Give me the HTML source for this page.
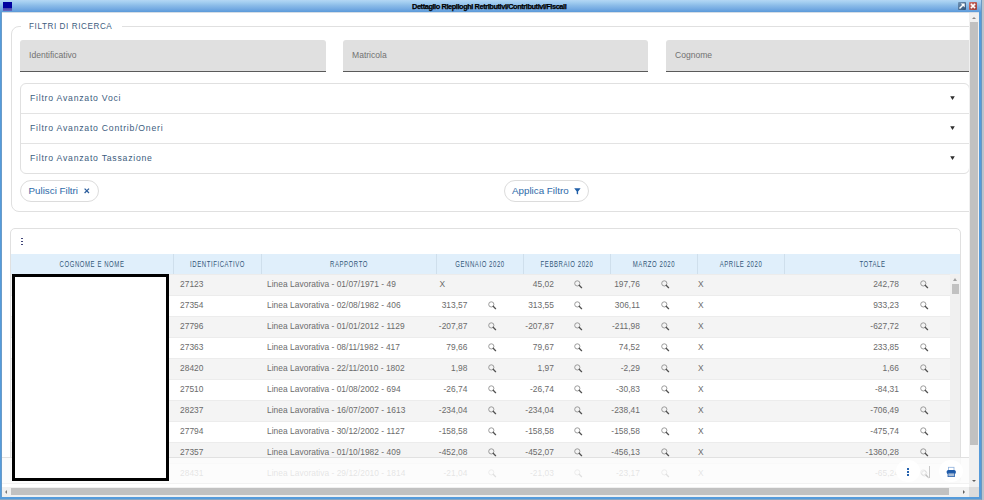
<!DOCTYPE html>
<html><head><meta charset="utf-8">
<style>
*{box-sizing:border-box;margin:0;padding:0}
html,body{width:984px;height:500px;overflow:hidden;background:#b9c4ce;font-family:"Liberation Sans",sans-serif}
#win{position:absolute;left:0;top:0;width:982px;height:500px;background:#559bdb;border-right:1px solid #6b97c0;border-bottom:1px solid #87a7c3}
#win .lb{position:absolute;left:1px;top:12px;width:1px;height:485px;background:#6a9bc8}
#title{position:absolute;left:0;top:0;width:981px;height:12px;background:linear-gradient(#b4d7f4 0%,#a2cdf0 20%,#8cbce8 45%,#74aae2 75%,#5b9ad9 100%)}
#tline{position:absolute;left:2px;top:12px;width:977px;height:1px;background:linear-gradient(90deg,#d5dde5,#d5dde5)}
#title .ico{position:absolute;left:3px;top:2px;width:9px;height:8.5px;background:linear-gradient(#0000a0 0,#0000a0 70%,#4a48b0 72%,#6a68bc 100%)}
#title .tt{position:absolute;left:412px;top:1.6px;font-size:7.4px;font-weight:bold;color:#000;-webkit-text-stroke:0.25px #000;letter-spacing:-0.42px;white-space:nowrap;line-height:9px}
.wbtn{position:absolute;top:2px;width:8px;height:8px;border-radius:1px}
#clip{position:absolute;left:2px;top:12px;width:967px;height:475px;background:#fff;overflow:hidden}
#pg{position:absolute;left:-2px;top:-12px;width:984px;height:500px}
#vsb{position:absolute;left:969px;top:12px;width:10px;height:475px;background:#f0f0f0}
#vsb .th{position:absolute;left:1px;top:10px;width:8px;height:423px;background:#c1c1c1}
#vsb .ua{position:absolute;left:3px;top:4.5px;width:0;height:0;border-left:2px solid transparent;border-right:2px solid transparent;border-bottom:2px solid #8a8a8a}
#vsb .da{position:absolute;left:3px;top:468px;width:0;height:0;border-left:2px solid transparent;border-right:2px solid transparent;border-top:2px solid #606060}
#hsb .la{position:absolute;left:3px;top:2.5px;width:0;height:0;border-top:2px solid transparent;border-bottom:2px solid transparent;border-right:2px solid #7a7a7a}
#hsb .ra{position:absolute;left:961px;top:2.5px;width:0;height:0;border-top:2px solid transparent;border-bottom:2px solid transparent;border-left:2px solid #606060}
#hsb{position:absolute;left:2px;top:487px;width:967px;height:10px;background:#f0f0f0}
#hsb .th{position:absolute;left:9px;top:1px;width:938px;height:7px;background:#c1c1c1}
#corner{position:absolute;left:969px;top:487px;width:10px;height:10px;background:#dcdcdc}
.fs{position:absolute;left:11px;top:26px;width:1100px;height:186px;border:1px solid #e0e0e0;border-radius:8px}
.legend{position:absolute;left:20.5px;top:20px;width:101.5px;height:12px;background:#fff}
.legend span{position:absolute;left:8.5px;top:0px;font-size:9.8px;color:#3d5d7e;letter-spacing:0.7px;line-height:12px;white-space:nowrap;transform:scaleX(0.83);transform-origin:0 0}
.inp{position:absolute;top:40px;width:305px;height:32px;background:#e0e0e0;border-radius:3px 3px 0 0;border-bottom:1px solid #5a5a5a}
.inp span{position:absolute;left:8.5px;top:9px;font-size:8.7px;color:#727272;transform:scaleX(0.985);transform-origin:0 0;line-height:12px;white-space:nowrap}
.acc{position:absolute;left:20px;top:83px;width:950px;height:91px;border:1px solid #e0e0e0;border-radius:6px}
.acc .it{position:absolute;left:0;width:948px;height:30px}
.acc .it+.it{border-top:1px solid #e3e3e3}
.acc .lab{position:absolute;left:8.5px;top:8px;font-size:9.6px;color:#3d5d7e;letter-spacing:0.85px;transform:scaleX(0.903);transform-origin:0 0;line-height:12px;white-space:nowrap}
.acc .arr{position:absolute;left:928.8px;top:12px;width:5px;height:4px}
.pill{position:absolute;height:22px;border:1px solid #dcdcdc;border-radius:11px;background:#fff}
.pill span{position:absolute;top:4px;font-size:9.8px;color:#2e6aa9;line-height:12px;white-space:nowrap}
.card{position:absolute;left:10px;top:228px;width:951px;height:256px;border:1px solid #e0e0e0;border-radius:5px;background:#fff}
.hdr{position:absolute;left:11px;top:254px;width:949px;height:20px;background:#e0effb}
.hdr .c{position:absolute;top:0;height:20px;border-left:1px solid #cfdfec}
.hdr .c span{position:absolute;left:0;right:0;top:6px;text-align:center;font-size:8.2px;transform:scaleX(0.73);letter-spacing:0.8px;color:#34587a;line-height:9px;white-space:nowrap}
.row{position:absolute;left:0;width:950px;height:21px;background:#fff;border-top:1px solid #ececec}
.row.odd{background:#f4f4f4}
.row .t{position:absolute;top:4px;font-size:8.4px;color:#6b6b6b;line-height:11px;white-space:nowrap;letter-spacing:0.04px}
.row .r{text-align:right}
.row .m{position:absolute;top:5px;width:9px;height:9px}
.mg{display:block}
.abs{position:absolute}
.kebab{position:absolute;width:2px;height:8px}
.kebab i{position:absolute;left:0.2px;width:1.7px;height:1.8px;background:currentColor}
#ivsb{position:absolute;left:950px;top:274px;width:10px;height:210px;background:#f0f0f0}
#ivsb .up{position:absolute;left:2.8px;top:3.8px;width:0;height:0;border-left:2.5px solid transparent;border-right:2.5px solid transparent;border-bottom:3px solid #a0a0a0}
#ivsb .th{position:absolute;left:2px;top:10px;width:7px;height:10px;background:#c1c1c1}
#ovl{position:absolute;left:2px;top:457px;width:967px;height:27px;background:rgba(252,252,252,0.84);border-top:1px solid rgba(215,215,215,0.7);border-bottom:1px solid rgba(235,235,235,0.6)}
.circ{position:absolute;border-radius:50%;background:#fff}
#redact{position:absolute;left:12px;top:274px;width:157px;height:207px;border:3px solid #000;background:#fff}

</style></head><body>
<div id="win"><div class="lb"></div>
  <div id="title"><div class="ico"></div><div class="tt">Dettaglio Riepiloghi Retributivi/Contributivi/Fiscali</div>
    <div class="wbtn" style="left:958px;background:linear-gradient(135deg,#7396b8,#2a4e73)"><svg class="abs" style="left:0;top:0" width="8" height="8" viewBox="0 0 8 8"><path d="M1.5 6.5L4.8 3.2" stroke="#fff" stroke-width="1.5"/><path d="M2.6 1.4H6.7V5.5Z" fill="#fff"/></svg></div>
    <div class="wbtn" style="left:968.5px;background:linear-gradient(135deg,#cf7068,#9a3e38)"><svg class="abs" style="left:0;top:0" width="8" height="8" viewBox="0 0 8 8"><path d="M1.9 1.9L6.1 6.1M6.1 1.9L1.9 6.1" stroke="#fff" stroke-width="1.5"/></svg></div>
  </div>
  <div id="clip"><div id="pg">
    <div class="fs"></div>
    <div class="legend"><span>FILTRI DI RICERCA</span></div>
    <div class="inp" style="left:20px;width:306px"><span>Identificativo</span></div>
    <div class="inp" style="left:343px"><span>Matricola</span></div>
    <div class="inp" style="left:666px"><span>Cognome</span></div>
    <div class="acc">
      <div class="it" style="top:0"><div class="lab">Filtro Avanzato Voci</div><svg class="arr" viewBox="0 0 5 4"><path d="M0.2 0.2H4.8L2.5 3.9Z" fill="#2e2e2e"/></svg></div>
      <div class="it" style="top:29px"><div class="lab">Filtro Avanzato Contrib/Oneri</div><svg class="arr" viewBox="0 0 5 4"><path d="M0.2 0.2H4.8L2.5 3.9Z" fill="#2e2e2e"/></svg></div>
      <div class="it" style="top:59px"><div class="lab">Filtro Avanzato Tassazione</div><svg class="arr" viewBox="0 0 5 4"><path d="M0.2 0.2H4.8L2.5 3.9Z" fill="#2e2e2e"/></svg></div>
    </div>
    <div class="pill" style="left:20px;top:180px;width:79px"><span style="left:7.5px">Pulisci Filtri</span><svg class="abs" style="left:63px;top:6.8px" width="6" height="6" viewBox="0 0 6 6"><path d="M0.6 0.6L5 5M5 0.6L0.6 5" stroke="#2b5d9c" stroke-width="1.25"/></svg></div>
    <div class="pill" style="left:504px;top:180px;width:85px"><span style="left:7px">Applica Filtro</span><svg class="abs" style="left:68.5px;top:7px" width="7" height="7" viewBox="0 0 7 7"><path d="M0.2 0.3H6.6L4.1 3.4V6.6L2.7 5.8V3.4Z" fill="#1f5ea8"/></svg></div>
    <div class="card"></div>
    <div class="hdr">
      <div class="c" style="left:0;width:162px;border-left:none"><span>COGNOME E NOME</span></div>
      <div class="c" style="left:162px;width:88px"><span>IDENTIFICATIVO</span></div>
      <div class="c" style="left:250px;width:175px"><span>RAPPORTO</span></div>
      <div class="c" style="left:425px;width:87px"><span>GENNAIO 2020</span></div>
      <div class="c" style="left:512px;width:87px"><span>FEBBRAIO 2020</span></div>
      <div class="c" style="left:599px;width:87px"><span>MARZO 2020</span></div>
      <div class="c" style="left:686px;width:87px"><span>APRILE 2020</span></div>
      <div class="c" style="left:773px;width:176px"><span>TOTALE</span></div>
    </div>
    <div id="rows" style="position:absolute;left:11px;top:0;width:939px;height:500px;overflow:hidden">
<div class="row odd" style="top:274px"><span class="t" style="left:169px">27123</span><span class="t" style="left:256px">Linea Lavorativa - 01/07/1971 - 49</span><span class="t" style="left:428.5px">X</span><span class="t r" style="left:483.0px;width:60px">45,02</span><span class="m" style="left:562.8px"><svg class="mg" width="9" height="9" viewBox="0 0 9 9"><circle cx="3.3" cy="3.4" r="2.6" fill="none" stroke="#8a8a8a" stroke-width="0.85"/><path d="M5.2 5.3 L7.6 7.7" stroke="#505050" stroke-width="1.25" stroke-linecap="round"/></svg></span><span class="t r" style="left:569.0px;width:60px">197,76</span><span class="m" style="left:650.0px"><svg class="mg" width="9" height="9" viewBox="0 0 9 9"><circle cx="3.3" cy="3.4" r="2.6" fill="none" stroke="#8a8a8a" stroke-width="0.85"/><path d="M5.2 5.3 L7.6 7.7" stroke="#505050" stroke-width="1.25" stroke-linecap="round"/></svg></span><span class="t" style="left:687px">X</span><span class="t r" style="left:828px;width:60px">242,78</span><span class="m" style="left:909px"><svg class="mg" width="9" height="9" viewBox="0 0 9 9"><circle cx="3.3" cy="3.4" r="2.6" fill="none" stroke="#8a8a8a" stroke-width="0.85"/><path d="M5.2 5.3 L7.6 7.7" stroke="#505050" stroke-width="1.25" stroke-linecap="round"/></svg></span></div>
<div class="row" style="top:295px"><span class="t" style="left:169px">27354</span><span class="t" style="left:256px">Linea Lavorativa - 02/08/1982 - 406</span><span class="t r" style="left:396.5px;width:60px">313,57</span><span class="m" style="left:476.5px"><svg class="mg" width="9" height="9" viewBox="0 0 9 9"><circle cx="3.3" cy="3.4" r="2.6" fill="none" stroke="#8a8a8a" stroke-width="0.85"/><path d="M5.2 5.3 L7.6 7.7" stroke="#505050" stroke-width="1.25" stroke-linecap="round"/></svg></span><span class="t r" style="left:483.0px;width:60px">313,55</span><span class="m" style="left:562.8px"><svg class="mg" width="9" height="9" viewBox="0 0 9 9"><circle cx="3.3" cy="3.4" r="2.6" fill="none" stroke="#8a8a8a" stroke-width="0.85"/><path d="M5.2 5.3 L7.6 7.7" stroke="#505050" stroke-width="1.25" stroke-linecap="round"/></svg></span><span class="t r" style="left:569.0px;width:60px">306,11</span><span class="m" style="left:650.0px"><svg class="mg" width="9" height="9" viewBox="0 0 9 9"><circle cx="3.3" cy="3.4" r="2.6" fill="none" stroke="#8a8a8a" stroke-width="0.85"/><path d="M5.2 5.3 L7.6 7.7" stroke="#505050" stroke-width="1.25" stroke-linecap="round"/></svg></span><span class="t" style="left:687px">X</span><span class="t r" style="left:828px;width:60px">933,23</span><span class="m" style="left:909px"><svg class="mg" width="9" height="9" viewBox="0 0 9 9"><circle cx="3.3" cy="3.4" r="2.6" fill="none" stroke="#8a8a8a" stroke-width="0.85"/><path d="M5.2 5.3 L7.6 7.7" stroke="#505050" stroke-width="1.25" stroke-linecap="round"/></svg></span></div>
<div class="row odd" style="top:316px"><span class="t" style="left:169px">27796</span><span class="t" style="left:256px">Linea Lavorativa - 01/01/2012 - 1129</span><span class="t r" style="left:396.5px;width:60px">-207,87</span><span class="m" style="left:476.5px"><svg class="mg" width="9" height="9" viewBox="0 0 9 9"><circle cx="3.3" cy="3.4" r="2.6" fill="none" stroke="#8a8a8a" stroke-width="0.85"/><path d="M5.2 5.3 L7.6 7.7" stroke="#505050" stroke-width="1.25" stroke-linecap="round"/></svg></span><span class="t r" style="left:483.0px;width:60px">-207,87</span><span class="m" style="left:562.8px"><svg class="mg" width="9" height="9" viewBox="0 0 9 9"><circle cx="3.3" cy="3.4" r="2.6" fill="none" stroke="#8a8a8a" stroke-width="0.85"/><path d="M5.2 5.3 L7.6 7.7" stroke="#505050" stroke-width="1.25" stroke-linecap="round"/></svg></span><span class="t r" style="left:569.0px;width:60px">-211,98</span><span class="m" style="left:650.0px"><svg class="mg" width="9" height="9" viewBox="0 0 9 9"><circle cx="3.3" cy="3.4" r="2.6" fill="none" stroke="#8a8a8a" stroke-width="0.85"/><path d="M5.2 5.3 L7.6 7.7" stroke="#505050" stroke-width="1.25" stroke-linecap="round"/></svg></span><span class="t" style="left:687px">X</span><span class="t r" style="left:828px;width:60px">-627,72</span><span class="m" style="left:909px"><svg class="mg" width="9" height="9" viewBox="0 0 9 9"><circle cx="3.3" cy="3.4" r="2.6" fill="none" stroke="#8a8a8a" stroke-width="0.85"/><path d="M5.2 5.3 L7.6 7.7" stroke="#505050" stroke-width="1.25" stroke-linecap="round"/></svg></span></div>
<div class="row" style="top:337px"><span class="t" style="left:169px">27363</span><span class="t" style="left:256px">Linea Lavorativa - 08/11/1982 - 417</span><span class="t r" style="left:396.5px;width:60px">79,66</span><span class="m" style="left:476.5px"><svg class="mg" width="9" height="9" viewBox="0 0 9 9"><circle cx="3.3" cy="3.4" r="2.6" fill="none" stroke="#8a8a8a" stroke-width="0.85"/><path d="M5.2 5.3 L7.6 7.7" stroke="#505050" stroke-width="1.25" stroke-linecap="round"/></svg></span><span class="t r" style="left:483.0px;width:60px">79,67</span><span class="m" style="left:562.8px"><svg class="mg" width="9" height="9" viewBox="0 0 9 9"><circle cx="3.3" cy="3.4" r="2.6" fill="none" stroke="#8a8a8a" stroke-width="0.85"/><path d="M5.2 5.3 L7.6 7.7" stroke="#505050" stroke-width="1.25" stroke-linecap="round"/></svg></span><span class="t r" style="left:569.0px;width:60px">74,52</span><span class="m" style="left:650.0px"><svg class="mg" width="9" height="9" viewBox="0 0 9 9"><circle cx="3.3" cy="3.4" r="2.6" fill="none" stroke="#8a8a8a" stroke-width="0.85"/><path d="M5.2 5.3 L7.6 7.7" stroke="#505050" stroke-width="1.25" stroke-linecap="round"/></svg></span><span class="t" style="left:687px">X</span><span class="t r" style="left:828px;width:60px">233,85</span><span class="m" style="left:909px"><svg class="mg" width="9" height="9" viewBox="0 0 9 9"><circle cx="3.3" cy="3.4" r="2.6" fill="none" stroke="#8a8a8a" stroke-width="0.85"/><path d="M5.2 5.3 L7.6 7.7" stroke="#505050" stroke-width="1.25" stroke-linecap="round"/></svg></span></div>
<div class="row odd" style="top:358px"><span class="t" style="left:169px">28420</span><span class="t" style="left:256px">Linea Lavorativa - 22/11/2010 - 1802</span><span class="t r" style="left:396.5px;width:60px">1,98</span><span class="m" style="left:476.5px"><svg class="mg" width="9" height="9" viewBox="0 0 9 9"><circle cx="3.3" cy="3.4" r="2.6" fill="none" stroke="#8a8a8a" stroke-width="0.85"/><path d="M5.2 5.3 L7.6 7.7" stroke="#505050" stroke-width="1.25" stroke-linecap="round"/></svg></span><span class="t r" style="left:483.0px;width:60px">1,97</span><span class="m" style="left:562.8px"><svg class="mg" width="9" height="9" viewBox="0 0 9 9"><circle cx="3.3" cy="3.4" r="2.6" fill="none" stroke="#8a8a8a" stroke-width="0.85"/><path d="M5.2 5.3 L7.6 7.7" stroke="#505050" stroke-width="1.25" stroke-linecap="round"/></svg></span><span class="t r" style="left:569.0px;width:60px">-2,29</span><span class="m" style="left:650.0px"><svg class="mg" width="9" height="9" viewBox="0 0 9 9"><circle cx="3.3" cy="3.4" r="2.6" fill="none" stroke="#8a8a8a" stroke-width="0.85"/><path d="M5.2 5.3 L7.6 7.7" stroke="#505050" stroke-width="1.25" stroke-linecap="round"/></svg></span><span class="t" style="left:687px">X</span><span class="t r" style="left:828px;width:60px">1,66</span><span class="m" style="left:909px"><svg class="mg" width="9" height="9" viewBox="0 0 9 9"><circle cx="3.3" cy="3.4" r="2.6" fill="none" stroke="#8a8a8a" stroke-width="0.85"/><path d="M5.2 5.3 L7.6 7.7" stroke="#505050" stroke-width="1.25" stroke-linecap="round"/></svg></span></div>
<div class="row" style="top:379px"><span class="t" style="left:169px">27510</span><span class="t" style="left:256px">Linea Lavorativa - 01/08/2002 - 694</span><span class="t r" style="left:396.5px;width:60px">-26,74</span><span class="m" style="left:476.5px"><svg class="mg" width="9" height="9" viewBox="0 0 9 9"><circle cx="3.3" cy="3.4" r="2.6" fill="none" stroke="#8a8a8a" stroke-width="0.85"/><path d="M5.2 5.3 L7.6 7.7" stroke="#505050" stroke-width="1.25" stroke-linecap="round"/></svg></span><span class="t r" style="left:483.0px;width:60px">-26,74</span><span class="m" style="left:562.8px"><svg class="mg" width="9" height="9" viewBox="0 0 9 9"><circle cx="3.3" cy="3.4" r="2.6" fill="none" stroke="#8a8a8a" stroke-width="0.85"/><path d="M5.2 5.3 L7.6 7.7" stroke="#505050" stroke-width="1.25" stroke-linecap="round"/></svg></span><span class="t r" style="left:569.0px;width:60px">-30,83</span><span class="m" style="left:650.0px"><svg class="mg" width="9" height="9" viewBox="0 0 9 9"><circle cx="3.3" cy="3.4" r="2.6" fill="none" stroke="#8a8a8a" stroke-width="0.85"/><path d="M5.2 5.3 L7.6 7.7" stroke="#505050" stroke-width="1.25" stroke-linecap="round"/></svg></span><span class="t" style="left:687px">X</span><span class="t r" style="left:828px;width:60px">-84,31</span><span class="m" style="left:909px"><svg class="mg" width="9" height="9" viewBox="0 0 9 9"><circle cx="3.3" cy="3.4" r="2.6" fill="none" stroke="#8a8a8a" stroke-width="0.85"/><path d="M5.2 5.3 L7.6 7.7" stroke="#505050" stroke-width="1.25" stroke-linecap="round"/></svg></span></div>
<div class="row odd" style="top:400px"><span class="t" style="left:169px">28237</span><span class="t" style="left:256px">Linea Lavorativa - 16/07/2007 - 1613</span><span class="t r" style="left:396.5px;width:60px">-234,04</span><span class="m" style="left:476.5px"><svg class="mg" width="9" height="9" viewBox="0 0 9 9"><circle cx="3.3" cy="3.4" r="2.6" fill="none" stroke="#8a8a8a" stroke-width="0.85"/><path d="M5.2 5.3 L7.6 7.7" stroke="#505050" stroke-width="1.25" stroke-linecap="round"/></svg></span><span class="t r" style="left:483.0px;width:60px">-234,04</span><span class="m" style="left:562.8px"><svg class="mg" width="9" height="9" viewBox="0 0 9 9"><circle cx="3.3" cy="3.4" r="2.6" fill="none" stroke="#8a8a8a" stroke-width="0.85"/><path d="M5.2 5.3 L7.6 7.7" stroke="#505050" stroke-width="1.25" stroke-linecap="round"/></svg></span><span class="t r" style="left:569.0px;width:60px">-238,41</span><span class="m" style="left:650.0px"><svg class="mg" width="9" height="9" viewBox="0 0 9 9"><circle cx="3.3" cy="3.4" r="2.6" fill="none" stroke="#8a8a8a" stroke-width="0.85"/><path d="M5.2 5.3 L7.6 7.7" stroke="#505050" stroke-width="1.25" stroke-linecap="round"/></svg></span><span class="t" style="left:687px">X</span><span class="t r" style="left:828px;width:60px">-706,49</span><span class="m" style="left:909px"><svg class="mg" width="9" height="9" viewBox="0 0 9 9"><circle cx="3.3" cy="3.4" r="2.6" fill="none" stroke="#8a8a8a" stroke-width="0.85"/><path d="M5.2 5.3 L7.6 7.7" stroke="#505050" stroke-width="1.25" stroke-linecap="round"/></svg></span></div>
<div class="row" style="top:421px"><span class="t" style="left:169px">27794</span><span class="t" style="left:256px">Linea Lavorativa - 30/12/2002 - 1127</span><span class="t r" style="left:396.5px;width:60px">-158,58</span><span class="m" style="left:476.5px"><svg class="mg" width="9" height="9" viewBox="0 0 9 9"><circle cx="3.3" cy="3.4" r="2.6" fill="none" stroke="#8a8a8a" stroke-width="0.85"/><path d="M5.2 5.3 L7.6 7.7" stroke="#505050" stroke-width="1.25" stroke-linecap="round"/></svg></span><span class="t r" style="left:483.0px;width:60px">-158,58</span><span class="m" style="left:562.8px"><svg class="mg" width="9" height="9" viewBox="0 0 9 9"><circle cx="3.3" cy="3.4" r="2.6" fill="none" stroke="#8a8a8a" stroke-width="0.85"/><path d="M5.2 5.3 L7.6 7.7" stroke="#505050" stroke-width="1.25" stroke-linecap="round"/></svg></span><span class="t r" style="left:569.0px;width:60px">-158,58</span><span class="m" style="left:650.0px"><svg class="mg" width="9" height="9" viewBox="0 0 9 9"><circle cx="3.3" cy="3.4" r="2.6" fill="none" stroke="#8a8a8a" stroke-width="0.85"/><path d="M5.2 5.3 L7.6 7.7" stroke="#505050" stroke-width="1.25" stroke-linecap="round"/></svg></span><span class="t" style="left:687px">X</span><span class="t r" style="left:828px;width:60px">-475,74</span><span class="m" style="left:909px"><svg class="mg" width="9" height="9" viewBox="0 0 9 9"><circle cx="3.3" cy="3.4" r="2.6" fill="none" stroke="#8a8a8a" stroke-width="0.85"/><path d="M5.2 5.3 L7.6 7.7" stroke="#505050" stroke-width="1.25" stroke-linecap="round"/></svg></span></div>
<div class="row odd" style="top:442px"><span class="t" style="left:169px">27357</span><span class="t" style="left:256px">Linea Lavorativa - 01/10/1982 - 409</span><span class="t r" style="left:396.5px;width:60px">-452,08</span><span class="m" style="left:476.5px"><svg class="mg" width="9" height="9" viewBox="0 0 9 9"><circle cx="3.3" cy="3.4" r="2.6" fill="none" stroke="#8a8a8a" stroke-width="0.85"/><path d="M5.2 5.3 L7.6 7.7" stroke="#505050" stroke-width="1.25" stroke-linecap="round"/></svg></span><span class="t r" style="left:483.0px;width:60px">-452,07</span><span class="m" style="left:562.8px"><svg class="mg" width="9" height="9" viewBox="0 0 9 9"><circle cx="3.3" cy="3.4" r="2.6" fill="none" stroke="#8a8a8a" stroke-width="0.85"/><path d="M5.2 5.3 L7.6 7.7" stroke="#505050" stroke-width="1.25" stroke-linecap="round"/></svg></span><span class="t r" style="left:569.0px;width:60px">-456,13</span><span class="m" style="left:650.0px"><svg class="mg" width="9" height="9" viewBox="0 0 9 9"><circle cx="3.3" cy="3.4" r="2.6" fill="none" stroke="#8a8a8a" stroke-width="0.85"/><path d="M5.2 5.3 L7.6 7.7" stroke="#505050" stroke-width="1.25" stroke-linecap="round"/></svg></span><span class="t" style="left:687px">X</span><span class="t r" style="left:828px;width:60px">-1360,28</span><span class="m" style="left:909px"><svg class="mg" width="9" height="9" viewBox="0 0 9 9"><circle cx="3.3" cy="3.4" r="2.6" fill="none" stroke="#8a8a8a" stroke-width="0.85"/><path d="M5.2 5.3 L7.6 7.7" stroke="#505050" stroke-width="1.25" stroke-linecap="round"/></svg></span></div>
<div class="row" style="top:463px"><span class="t" style="left:169px">28431</span><span class="t" style="left:256px">Linea Lavorativa - 29/12/2010 - 1814</span><span class="t r" style="left:396.5px;width:60px">-21,04</span><span class="m" style="left:476.5px"><svg class="mg" width="9" height="9" viewBox="0 0 9 9"><circle cx="3.3" cy="3.4" r="2.6" fill="none" stroke="#8a8a8a" stroke-width="0.85"/><path d="M5.2 5.3 L7.6 7.7" stroke="#505050" stroke-width="1.25" stroke-linecap="round"/></svg></span><span class="t r" style="left:483.0px;width:60px">-21,03</span><span class="m" style="left:562.8px"><svg class="mg" width="9" height="9" viewBox="0 0 9 9"><circle cx="3.3" cy="3.4" r="2.6" fill="none" stroke="#8a8a8a" stroke-width="0.85"/><path d="M5.2 5.3 L7.6 7.7" stroke="#505050" stroke-width="1.25" stroke-linecap="round"/></svg></span><span class="t r" style="left:569.0px;width:60px">-23,17</span><span class="m" style="left:650.0px"><svg class="mg" width="9" height="9" viewBox="0 0 9 9"><circle cx="3.3" cy="3.4" r="2.6" fill="none" stroke="#8a8a8a" stroke-width="0.85"/><path d="M5.2 5.3 L7.6 7.7" stroke="#505050" stroke-width="1.25" stroke-linecap="round"/></svg></span><span class="t" style="left:687px">X</span><span class="t r" style="left:828px;width:60px">-65,24</span><span class="m" style="left:909px"><svg class="mg" width="9" height="9" viewBox="0 0 9 9"><circle cx="3.3" cy="3.4" r="2.6" fill="none" stroke="#8a8a8a" stroke-width="0.85"/><path d="M5.2 5.3 L7.6 7.7" stroke="#505050" stroke-width="1.25" stroke-linecap="round"/></svg></span></div>
    </div>
    <div class="kebab" style="left:21px;top:237.5px;color:#41467a"><i style="top:0"></i><i style="top:3px"></i><i style="top:6px"></i></div>
    <div id="ivsb"><div class="up"></div><div class="th"></div></div>
    <div id="ovl"></div>
    <div class="circ" style="left:896px;top:460px;width:24px;height:22px"></div>
    <div class="kebab" style="left:907px;top:468px;color:#2563b0"><i style="top:0"></i><i style="top:3px"></i><i style="top:6px"></i></div>
    <div class="abs" style="left:920.5px;top:469.5px;opacity:0.22"><svg class="mg" width="9" height="9" viewBox="0 0 9 9"><circle cx="3.3" cy="3.4" r="2.6" fill="none" stroke="#8a8a8a" stroke-width="0.85"/><path d="M5.2 5.3 L7.6 7.7" stroke="#505050" stroke-width="1.25" stroke-linecap="round"/></svg></div>
    <div class="abs" style="left:929px;top:466px;width:1px;height:12px;background:#c8c8c8"></div>
    <div class="circ" style="left:939px;top:460px;width:24px;height:22px"></div>
    <svg class="abs" style="left:946px;top:466px" width="11" height="12" viewBox="0 0 11 12">
      <rect x="2.4" y="1.3" width="5.6" height="3.2" fill="#fff" stroke="#8db0dc" stroke-width="0.8"/>
      <rect x="0.7" y="3.9" width="9.1" height="4.1" rx="1.6" fill="#1d59a8"/>
      <rect x="2" y="7" width="6.5" height="3.6" fill="#aabdd6" stroke="#2a64b0" stroke-width="0.8"/>
    </svg>
    <div id="redact"></div>

  </div></div>
  <div id="vsb"><div class="ua"></div><div class="th"></div><div class="da"></div></div>
  <div id="hsb"><div class="la"></div><div class="th"></div><div class="ra"></div></div>
  <div id="corner"></div>
  <div id="tline"></div>
</div>
</body></html>
